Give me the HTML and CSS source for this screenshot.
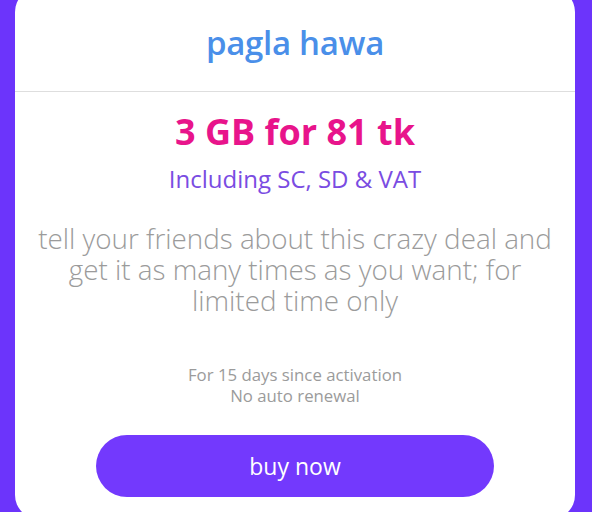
FILE: index.html
```html
<!DOCTYPE html>
<html>
<head>
<meta charset="utf-8">
<link rel="stylesheet" href="styles.css">
</head>
<body>
<div class="card">
  <div class="card-head">
    <h1 class="title">pagla hawa</h1>
  </div>
  <div class="card-body">
    <div class="price">3 GB for 81 tk</div>
    <div class="tax">Including SC, SD &amp; VAT</div>
    <p class="desc">tell your friends about this crazy deal and get it as many times as you want; for limited time only</p>
    <div class="terms">
      <div>For 15 days since activation</div>
      <div>No auto renewal</div>
    </div>
    <button class="buy">buy now</button>
  </div>
</div>
</body>
</html>
```
FILE: styles.css
```css
html, body {
  margin: 0;
  padding: 0;
}
body {
  background: #6c34fb;
  width: 592px;
  height: 512px;
  overflow: hidden;
  font-family: "Open Sans", "Noto Sans", sans-serif;
}
.card {
  margin: -12px 17px 0 15px;
  height: 531px;
  background: #ffffff;
  border-radius: 24px;
  display: flex;
  flex-direction: column;
}
.card-head {
  height: 104px;
  border-bottom: 1px solid #dedede;
  display: flex;
  align-items: center;
  justify-content: center;
  box-sizing: border-box;
  padding-top: 6px;
}
.title {
  margin: 0;
  font-size: 33px;
  line-height: 40px;
  font-weight: 600;
  color: #4a8fe9;
  letter-spacing: -0.3px;
}
.card-body {
  display: flex;
  flex-direction: column;
  align-items: center;
  text-align: center;
}
.price {
  margin-top: 20px;
  font-size: 36px;
  font-weight: 700;
  color: #e8148b;
  line-height: 40px;
}
.tax {
  margin-top: 12px;
  font-size: 24px;
  color: #7a4ce2;
  line-height: 30px;
}
.desc {
  margin: 29px 0 0;
  width: 528px;
  font-size: 27.8px;
  font-weight: 300;
  line-height: 31px;
  color: #9b9b9b;
}
.terms {
  margin-top: 48px;
  font-size: 16.8px;
  line-height: 21px;
  color: #9b9b9b;
}
.buy {
  margin-top: 29px;
  width: 398px;
  height: 62px;
  border: none;
  border-radius: 31px;
  background: #7339fd;
  color: #ffffff;
  font-family: inherit;
  font-size: 23px;
}
```
